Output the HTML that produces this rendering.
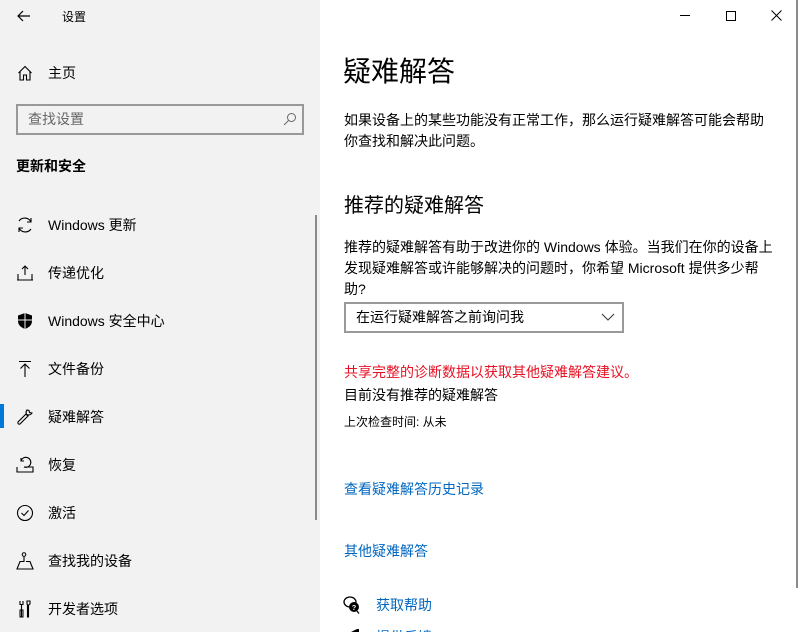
<!DOCTYPE html>
<html><head><meta charset="utf-8">
<style>
*{margin:0;padding:0;box-sizing:border-box}
html{width:800px;height:632px;overflow:hidden}
body{width:800px;height:632px;overflow:hidden;position:relative;background:#fff;font-family:"Liberation Sans","Noto Sans CJK SC",sans-serif;color:#000}
.abs{position:absolute;white-space:nowrap}
#left{position:absolute;left:0;top:0;width:320px;height:632px;background:#f2f2f2}
.nav{position:absolute;left:48px;font-size:14px;line-height:20px}
.ic{position:absolute;left:16px;width:18px;height:18px}
.t{font-size:14px;line-height:21px}
.link{color:#0067c0;font-size:14px}
</style></head><body>
<div id="left">
  <svg class="abs" style="left:17px;top:10px" width="14" height="12" viewBox="0 0 14 12"><path d="M13 6H1M6 1L1 6l5 5" fill="none" stroke="#000" stroke-width="1.2"/></svg>
  <div class="abs" style="left:62px;top:8px;font-size:12px;line-height:18px">设置</div>
  <svg class="abs" style="left:17px;top:65px" width="16" height="16" viewBox="0 0 16 16"><path d="M1.5 8L8 1.5 14.5 8M3 6.5V15h3.5v-5h3v5H13V6.5" fill="none" stroke="#000" stroke-width="1.1"/></svg>
  <div class="nav" style="top:63px">主页</div>
  <div class="abs" style="left:16px;top:104px;width:288px;height:31px;border:2px solid #999;background:#f2f2f2"></div>
  <div class="abs" style="left:28px;top:109px;font-size:14px;line-height:20px;color:#666">查找设置</div>
  <svg class="abs" style="left:283px;top:112px" width="14" height="14" viewBox="0 0 14 14"><circle cx="8.5" cy="5.5" r="4" fill="none" stroke="#666" stroke-width="1"/><path d="M5.5 8.5L1 13" stroke="#666" stroke-width="1"/></svg>
  <div class="abs" style="left:16px;top:156px;font-size:14px;font-weight:bold;line-height:20px">更新和安全</div>

  <svg class="ic" style="top:216px" viewBox="0 0 18 18"><path d="M15 6A7 7 0 0 0 3 5M3 12a7 7 0 0 0 12 1" fill="none" stroke="#000" stroke-width="1.1"/><path d="M15 2v4h-4M3 16v-4h4" fill="none" stroke="#000" stroke-width="1.1"/></svg>
  <div class="nav" style="top:215px">Windows 更新</div>
  <svg class="ic" style="top:264px" viewBox="0 0 18 18"><path d="M1 16h16M2 10v6M16 10v6M9 2v9M6 5l3-3 3 3" fill="none" stroke="#000" stroke-width="1.1"/></svg>
  <div class="nav" style="top:263px">传递优化</div>
  <svg class="ic" style="top:312px" viewBox="0 0 18 18"><path d="M9 1L2 3.5V9c0 4 3 6.5 7 8 4-1.5 7-4 7-8V3.5z" fill="#000"/><path d="M9 1v16M2 8h14" stroke="#f2f2f2" stroke-width="1"/></svg>
  <div class="nav" style="top:311px">Windows 安全中心</div>
  <svg class="ic" style="top:360px" viewBox="0 0 18 18"><path d="M3 1.5h12M9 4v13M4.5 8.5L9 4l4.5 4.5" fill="none" stroke="#000" stroke-width="1.1"/></svg>
  <div class="nav" style="top:359px">文件备份</div>
  <div class="abs" style="left:0;top:404px;width:4px;height:24px;background:#0078d7"></div>
  <svg class="ic" style="top:408px" viewBox="0 0 18 18"><path d="M11 2a4 4 0 0 0 1 6L4 16a1.5 1.5 0 0 1-2-2l8-8a4 4 0 0 0 6-1l-2.5-.5L13 2.5z" fill="none" stroke="#000" stroke-width="1.1"/></svg>
  <div class="nav" style="top:407px">疑难解答</div>
  <svg class="ic" style="top:456px" viewBox="0 0 18 18"><path d="M1 11v5h16v-5H8M5 5a5 5 0 1 1 3 6M5 2v3h3" fill="none" stroke="#000" stroke-width="1.1"/></svg>
  <div class="nav" style="top:455px">恢复</div>
  <svg class="ic" style="top:504px" viewBox="0 0 18 18"><circle cx="9" cy="9" r="7.5" fill="none" stroke="#000" stroke-width="1.1"/><path d="M5.5 9l2.5 2.5 4.5-5" fill="none" stroke="#000" stroke-width="1.1"/></svg>
  <div class="nav" style="top:503px">激活</div>
  <svg class="ic" style="top:552px" viewBox="0 0 18 18"><circle cx="8" cy="2.5" r="1.8" fill="none" stroke="#000" stroke-width="1"/><path d="M8 4.5v5H4L1 17h16l-3-7.5h-4" fill="none" stroke="#000" stroke-width="1.1"/></svg>
  <div class="nav" style="top:551px">查找我的设备</div>
  <svg class="ic" style="top:600px" viewBox="0 0 18 18"><path d="M4 1v3.5h3V1M5.5 4.5V17M11 1h3v3l-1.5 1v12h-1V5L11 4z" fill="none" stroke="#000" stroke-width="1.1"/><rect x="4" y="10" width="3" height="7" fill="none" stroke="#000" stroke-width="1"/></svg>
  <div class="nav" style="top:599px">开发者选项</div>
  <div class="abs" style="left:315px;top:215px;width:2px;height:305px;background:#8a8a8a"></div>
</div>

<div class="abs" style="left:680px;top:15px;width:10px;height:1px;background:#000"></div>
<div class="abs" style="left:726px;top:11px;width:10px;height:10px;border:1px solid #000"></div>
<svg class="abs" style="left:771px;top:10px" width="11" height="11" viewBox="0 0 11 11"><path d="M0.5 0.5l10 10M10.5 0.5l-10 10" stroke="#000" stroke-width="1"/></svg>

<div class="abs" style="left:343px;top:53px;font-size:28px;line-height:38px">疑难解答</div>
<div class="abs t" style="left:344px;top:110px">如果设备上的某些功能没有正常工作，那么运行疑难解答可能会帮助<br>你查找和解决此问题。</div>
<div class="abs" style="left:344px;top:192px;font-size:20px;line-height:28px">推荐的疑难解答</div>
<div class="abs t" style="left:344px;top:237px">推荐的疑难解答有助于改进你的 Windows 体验。当我们在你的设备上<br>发现疑难解答或许能够解决的问题时，你希望 Microsoft 提供多少帮<br>助?</div>
<div class="abs" style="left:344px;top:302px;width:280px;height:31px;border:2px solid #999"></div>
<div class="abs" style="left:356px;top:307px;font-size:14px;line-height:20px">在运行疑难解答之前询问我</div>
<svg class="abs" style="left:601px;top:313px" width="14" height="8" viewBox="0 0 14 8"><path d="M1 1l6 6 6-6" fill="none" stroke="#333" stroke-width="1"/></svg>
<div class="abs t" style="left:344px;top:362px;color:#e81123">共享完整的诊断数据以获取其他疑难解答建议。</div>
<div class="abs t" style="left:344px;top:385px">目前没有推荐的疑难解答</div>
<div class="abs" style="left:344px;top:413px;font-size:12px;line-height:18px">上次检查时间: 从未</div>
<div class="abs link" style="left:344px;top:479px;line-height:20px">查看疑难解答历史记录</div>
<div class="abs link" style="left:344px;top:541px;line-height:20px">其他疑难解答</div>
<svg class="abs" style="left:343px;top:596px" width="18" height="18" viewBox="0 0 18 18"><ellipse cx="7" cy="6" rx="6" ry="5" fill="none" stroke="#000" stroke-width="1.3"/><circle cx="11" cy="11" r="5" fill="#000"/><path d="M14 15l2 2.5" stroke="#000" stroke-width="1.3"/><text x="11" y="14" font-size="7" fill="#fff" text-anchor="middle" font-family="Liberation Sans" font-weight="bold">?</text></svg>
<div class="abs link" style="left:376px;top:595px;line-height:20px">获取帮助</div>
<svg class="abs" style="left:344px;top:628px" width="16" height="6" viewBox="0 0 16 6"><path d="M5 5L13 1h2v5" fill="#000"/></svg>
<div class="abs link" style="left:376px;top:627px;line-height:20px">提供反馈</div>
<div class="abs" style="left:796px;top:0;width:2px;height:588px;background:#8a8a8a"></div>
</body></html>
